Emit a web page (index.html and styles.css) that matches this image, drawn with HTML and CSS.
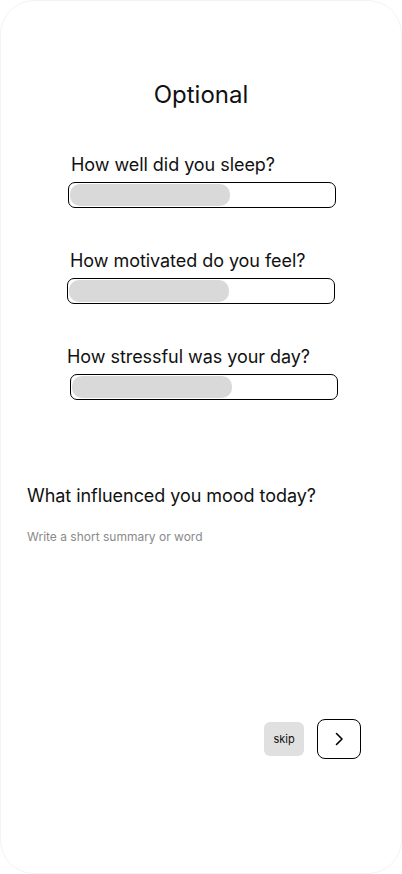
FILE: index.html
```html
<!DOCTYPE html>
<html lang="en">
<head>
    <meta charset="UTF-8">
    <meta name="viewport" content="width=device-width, initial-scale=1.0">
    <title>Optional</title>
    <link rel="stylesheet" href="styles.css">
</head>
<body>
    <div class="screen">
        <h1 class="title">Optional</h1>

        <div class="question q1">
            <p class="question-label">How well did you sleep?</p>
            <div class="slider"><div class="slider-fill" style="width: 160px"></div></div>
        </div>
        <div class="question q2">
            <p class="question-label">How motivated do you feel?</p>
            <div class="slider"><div class="slider-fill" style="width: 160px"></div></div>
        </div>
        <div class="question q3">
            <p class="question-label">How stressful was your day?</p>
            <div class="slider"><div class="slider-fill" style="width: 160px"></div></div>
        </div>

        <div class="mood">
            <p class="mood-label">What influenced you mood today?</p>
            <p class="mood-placeholder">Write a short summary or word</p>
        </div>

        <div class="actions">
            <button class="skip">skip</button>
            <button class="next">
                <svg width="16" height="16" viewBox="0 0 16 16" fill="none" stroke="#000" stroke-width="1.6" stroke-linecap="round" stroke-linejoin="round">
                    <path d="M5.5 2.5 L11 8 L5.5 13.5"/>
                </svg>
            </button>
        </div>
    </div>
</body>
</html>
```

FILE: styles.css
```css
body {
    margin: 0;
    background-color: #fff;
    font-family: Inter, "Noto Sans", sans-serif;
    color: #111;
}
.screen {
    box-sizing: border-box;
    width: 402px;
    height: 874px;
    border: 1px solid #f3f3f3;
    border-radius: 34px;
    display: flex;
    flex-direction: column;
    padding-top: 79px;
}
.title {
    margin: 0;
    text-align: center;
    font-size: 24px;
    font-weight: 400;
    line-height: 30px;
}
.question {
    display: flex;
    flex-direction: column;
    gap: 6px;
}
.q1 { margin: 44px 0 0 67px; }
.q2 { margin: 42px 0 0 66px; }
.q3 { margin: 42px 0 0 69px; }
.question-label {
    margin: 0;
    font-size: 18px;
    line-height: 22px;
    letter-spacing: -0.05px;
}
.q1 .question-label,
.q2 .question-label { padding-left: 3px; }
.q3 .question-label { margin-left: -3px; }
.slider {
    box-sizing: border-box;
    width: 268px;
    height: 26px;
    border: 1px solid #000;
    border-radius: 7px;
    padding: 1px;
}
.slider-fill {
    height: 22px;
    background-color: #d9d9d9;
    border-radius: 10px;
}
.mood {
    margin: 85px 0 0 26px;
}
.mood-label {
    margin: 0;
    font-size: 18px;
    line-height: 22px;
    letter-spacing: -0.05px;
}
.mood-placeholder {
    margin: 22px 0 0;
    font-size: 12px;
    line-height: 16px;
    color: #8a8a8a;
}
.actions {
    display: flex;
    justify-content: flex-end;
    align-items: center;
    gap: 13px;
    margin: 174px 40px 0 0;
}
.skip {
    width: 40px;
    height: 34px;
    border: none;
    border-radius: 6px;
    background-color: #e0e0e0;
    font-family: Inter, "Noto Sans", sans-serif;
    font-size: 11px;
    color: #111;
    padding: 0;
}
.next {
    box-sizing: border-box;
    width: 44px;
    height: 40px;
    border: 1px solid #000;
    border-radius: 8px;
    background: #fff;
    padding: 0;
    display: flex;
    align-items: center;
    justify-content: center;
}
```
